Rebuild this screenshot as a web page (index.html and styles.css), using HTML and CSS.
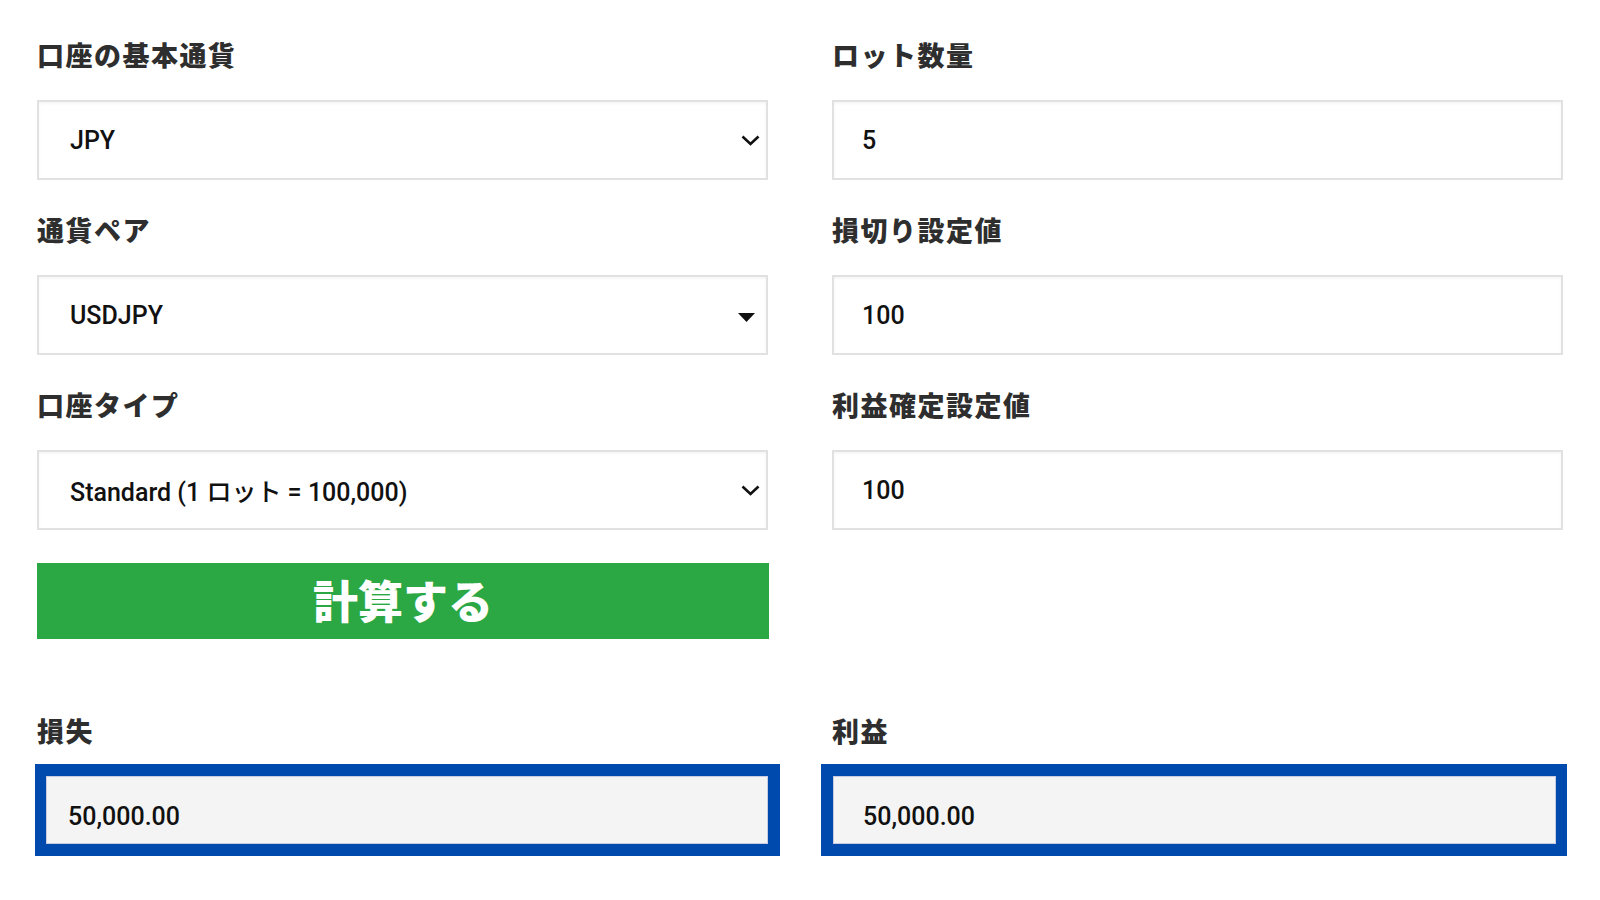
FILE: index.html
```html
<!DOCTYPE html>
<html lang="ja">
<head>
<meta charset="utf-8">
<title>計算機</title>
<link rel="stylesheet" href="styles.css">
</head>
<body>
<main class="calc">
  <div class="field">
    <label class="label">口座の基本通貨</label>
    <div class="box select">
      <span class="value">JPY</span>
      <svg class="chev" width="19" height="11" viewBox="0 0 19 11"><path d="M1.5 1.5 L9.5 9 L17.5 1.5" fill="none" stroke="#111" stroke-width="2.6"/></svg>
    </div>
  </div>
  <div class="field">
    <label class="label">ロット数量</label>
    <div class="box box-num"><span class="value">5</span></div>
  </div>

  <div class="field">
    <label class="label">通貨ペア</label>
    <div class="box select">
      <span class="value">USDJPY</span>
      <svg class="tri" width="17" height="9" viewBox="0 0 17 9"><path d="M0 0 H17 L8.5 9 Z" fill="#111"/></svg>
    </div>
  </div>
  <div class="field">
    <label class="label">損切り設定値</label>
    <div class="box box-num"><span class="value">100</span></div>
  </div>

  <div class="field">
    <label class="label">口座タイプ</label>
    <div class="box select">
      <span class="value">Standard (1 ロット = 100,000)</span>
      <svg class="chev" width="19" height="11" viewBox="0 0 19 11"><path d="M1.5 1.5 L9.5 9 L17.5 1.5" fill="none" stroke="#111" stroke-width="2.6"/></svg>
    </div>
  </div>
  <div class="field">
    <label class="label">利益確定設定値</label>
    <div class="box box-num"><span class="value">100</span></div>
  </div>

  <div class="action">
    <button class="btn" type="button">計算する</button>
  </div>
  <div class="action"></div>

  <div class="result-field">
    <label class="label">損失</label>
    <div class="result result-left"><div class="result-inner"><span class="value">50,000.00</span></div></div>
  </div>
  <div class="result-field">
    <label class="label">利益</label>
    <div class="result result-right"><div class="result-inner"><span class="value">50,000.00</span></div></div>
  </div>
</main>
</body>
</html>
```
FILE: styles.css
```css
* { box-sizing: border-box; }
html, body { margin: 0; background: #fff; }
body { font-family: Roboto, "Noto Sans CJK JP", sans-serif; }

.calc {
  display: grid;
  grid-template-columns: 731px 731px;
  column-gap: 64px;
  row-gap: 32px;
  padding: 37px 37px 0 37px;
}

.field { display: flex; flex-direction: column; }

.label {
  display: block;
  height: 40px;
  line-height: 35px;
  margin-bottom: 23px;
  font-family: "Noto Sans CJK JP", sans-serif;
  font-weight: 900;
  font-size: 27px;
  letter-spacing: 1.5px;
  color: #2e2e2e;
}

.box {
  height: 80px;
  border: 2px solid #e1e1e1;
  box-shadow: inset 0 2px 3px rgba(0,0,0,0.04);
  background: #fff;
  display: flex;
  align-items: center;
  padding: 0 6px 0 31px;
}
.box-num { padding-left: 28px; }

.select { justify-content: space-between; }

.value {
  font-family: Roboto, "Noto Sans CJK JP", sans-serif;
  font-weight: 500;
  font-size: 25px;
  color: #111;
}

.tri { margin-right: 5px; margin-top: 5px; }

.action { margin-top: 1px; }

.btn {
  display: flex;
  align-items: center;
  justify-content: center;
  width: 732px;
  height: 76px;
  border: 0;
  background: #2ba744;
  color: #fff;
  font-family: "Noto Sans CJK JP", sans-serif;
  font-weight: 900;
  font-size: 45px;
  letter-spacing: 0;
  padding: 0 0 4px 0;
  cursor: pointer;
}

.result-field { margin-top: 40px; display: flex; flex-direction: column; }
.result-field .label { margin-bottom: 13px; line-height: 39px; }

.result {
  height: 92px;
  border-style: solid;
  border-color: #004aad;
  border-width: 12px 12px 12px 11px;
  background: #004aad;
}
.result-left { width: 745px; margin-left: -2px; }
.result-right { width: 746px; margin-left: -11px; border-width: 12px 11px 12px 12px; }

.result-inner {
  height: 100%;
  background: #f4f4f4;
  border: 1px solid #c9cbe0;
  display: flex;
  align-items: center;
  padding-top: 13px;
}
.result-left .result-inner { padding-left: 21px; }
.result-right .result-inner { padding-left: 29px; }
```
